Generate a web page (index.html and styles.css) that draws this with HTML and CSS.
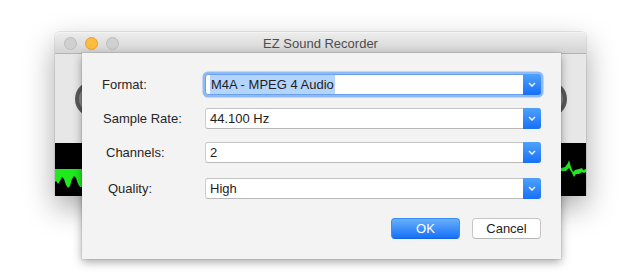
FILE: index.html
```html
<!DOCTYPE html>
<html lang="en">
<head>
    <meta charset="UTF-8">
    <title>EZ Sound Recorder</title>
    <link rel="stylesheet" href="styles.css">
</head>
<body>
    <div class="window">
        <div class="titlebar">
            <div class="lights">
                <span class="light"></span>
                <span class="light yellow"></span>
                <span class="light"></span>
            </div>
            <div class="title">EZ Sound Recorder</div>
        </div>

        <div class="win-body">
            <div class="controls">
                <span class="knob"></span>
                <span class="knob"></span>
            </div>
            <div class="scope">
                <svg width="531" height="53" viewBox="0 0 531 53">
                    <polygon fill="#1eea1e" points="0,26 27,26 27,44 25,44 23,41 21,35 19,33 17,36 15,43 13,45 11,42 9,36 7,34 5,38 3,41 1,38 0,39"/>
                    <polygon fill="#1eea1e" points="506,25 510,24 513,20 514,17 516,24 518,29 520,27 524,26 527,25 528,27 531,26 531,29 529,30 527,29 524,31 521,31 519,34 517,30 514,25 511,28 506,28"/>
                </svg>
            </div>
        </div>

        <!-- sheet dialog -->
        <div class="sheet">
            <div class="row">
                <label class="lbl">Format:</label>
                <div class="popup focused">
                    <span class="value"><span class="sel">M4A - MPEG 4 Audio</span></span>
                    <span class="arrow"><svg width="8" height="5" viewBox="0 0 8 5"><polyline points="1,1 4,4 7,1" fill="none" stroke="#fff" stroke-width="1.4"/></svg></span>
                </div>
            </div>
            <div class="row">
                <label class="lbl in1">Sample Rate:</label>
                <div class="popup">
                    <span class="value">44.100 Hz</span>
                    <span class="arrow"><svg width="8" height="5" viewBox="0 0 8 5"><polyline points="1,1 4,4 7,1" fill="none" stroke="#fff" stroke-width="1.4"/></svg></span>
                </div>
            </div>
            <div class="row last-gap">
                <label class="lbl in2">Channels:</label>
                <div class="popup">
                    <span class="value">2</span>
                    <span class="arrow"><svg width="8" height="5" viewBox="0 0 8 5"><polyline points="1,1 4,4 7,1" fill="none" stroke="#fff" stroke-width="1.4"/></svg></span>
                </div>
            </div>
            <div class="row">
                <label class="lbl in3">Quality:</label>
                <div class="popup">
                    <span class="value">High</span>
                    <span class="arrow"><svg width="8" height="5" viewBox="0 0 8 5"><polyline points="1,1 4,4 7,1" fill="none" stroke="#fff" stroke-width="1.4"/></svg></span>
                </div>
            </div>

            <div class="buttons">
                <button class="btn btn-ok">OK</button>
                <button class="btn">Cancel</button>
            </div>
        </div>
    </div>
</body>
</html>
```

FILE: styles.css
```css
body {
    margin: 0;
    background-color: #ffffff;
    font-family: 'Liberation Sans', Arial, sans-serif;
    font-size: 13px;
    color: #222222;
    width: 642px;
    height: 280px;
    overflow: hidden;
}

.window {
    position: relative;
    margin: 32px 0 0 55px;
    width: 531px;
    height: 163px;
    border-radius: 5px 5px 0 0;
    box-shadow: 0 12px 30px rgba(0, 0, 0, 0.35), 0 0 0 1px rgba(0, 0, 0, 0.08);
}

.titlebar {
    height: 20px;
    display: flex;
    align-items: center;
    border-radius: 5px 5px 0 0;
    background: linear-gradient(#ececec, #d4d4d4);
    border-top: 1px solid #f4f4f4;
    border-bottom: 1px solid #b3b3b3;
}

.lights {
    display: flex;
    gap: 8px;
    padding-left: 9px;
}

.light {
    width: 11px;
    height: 11px;
    border-radius: 50%;
    background-color: #d0d0d0;
    border: 0.5px solid #bcbcbc;
}

.light.yellow {
    background-color: #fdbc40;
    border-color: #dfa134;
}

.title {
    flex: 1;
    text-align: center;
    color: #4d4d4d;
    padding-right: 64px;
}

.win-body {
    height: 142px;
    display: flex;
    flex-direction: column;
}

.controls {
    flex: 1;
    background-color: #e7e7e7;
    display: flex;
    justify-content: space-between;
    align-items: center;
    padding: 0 19px 0 20px;
}

.knob {
    width: 28px;
    height: 28px;
    border-radius: 50%;
    border: 4px solid #5a5a5a;
    background-color: #8a8a8a;
}

.scope {
    height: 53px;
    background-color: #000000;
    line-height: 0;
}

.sheet {
    position: absolute;
    left: 27px;
    top: 21px;
    width: 459px;
    height: 165px;
    padding: 21px 20px 20px 0;
    background-color: #f3f3f3;
    box-shadow: 0 3px 9px rgba(0, 0, 0, 0.35), 0 0 0 0.5px rgba(0, 0, 0, 0.15);
}

.row {
    display: flex;
    align-items: center;
    height: 21px;
    margin-bottom: 13px;
}

.row.last-gap {
    margin-bottom: 15px;
}

.lbl {
    width: 103px;
    padding-left: 20px;
    color: #262626;
}

.lbl.in1 { width: 102px; padding-left: 21px; }
.lbl.in2 { width: 99px; padding-left: 24px; }
.lbl.in3 { width: 97px; padding-left: 26px; }

.popup {
    flex: 1;
    height: 21px;
    display: flex;
    box-sizing: border-box;
    background-color: #ffffff;
    border: 1px solid #cdcdcd;
    border-top-color: #c4c4c4;
    border-bottom-color: #b8b8b8;
    border-radius: 3px;
}

.popup.focused {
    box-shadow: 0 0 0 2.5px #8fbaf4;
    border-color: #6aa1ee;
}

.value {
    flex: 1;
    padding-left: 4px;
    line-height: 19px;
    color: #1e1e1e;
}

.sel {
    background-color: #b3d5fd;
    padding: 2px 1px 2px 1px;
}

.arrow {
    width: 18px;
    margin: -1px -1px -1px 0;
    border-radius: 0 3px 3px 0;
    background: linear-gradient(#4fa2fb, #166ff9);
    display: flex;
    align-items: center;
    justify-content: center;
}

.buttons {
    display: flex;
    justify-content: flex-end;
    gap: 12px;
    margin-top: 19px;
}

.btn {
    width: 69px;
    height: 21px;
    padding: 0;
    font-family: 'Liberation Sans', Arial, sans-serif;
    font-size: 13px;
    color: #1e1e1e;
    background-color: #ffffff;
    border: 1px solid #c6c6c6;
    border-bottom-color: #b5b5b5;
    border-radius: 4px;
}

.btn-ok {
    color: #ffffff;
    background: linear-gradient(#68b0fb, #1671f9);
    border-color: #3a8df8;
    border-bottom-color: #1565e0;
}
```
